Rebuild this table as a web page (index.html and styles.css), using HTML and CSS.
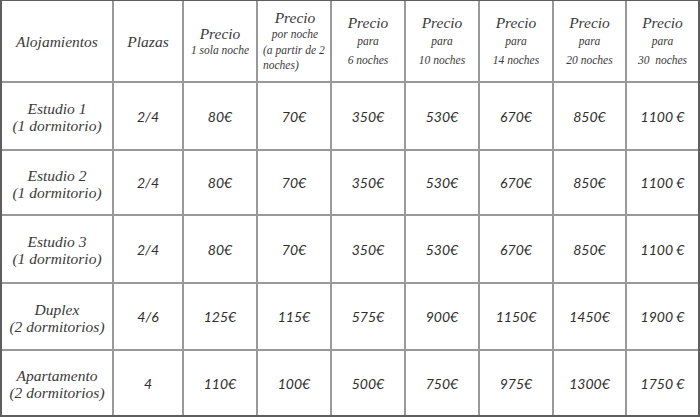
FILE: index.html
```html
<!DOCTYPE html>
<html lang="es">
<head>
<meta charset="utf-8">
<title>Tarifas</title>
<link rel="stylesheet" href="styles.css">
</head>
<body>
<div class="grid">
  <div class="cell head"><span class="big">Alojamientos</span></div>
  <div class="cell head"><span class="big">Plazas</span></div>
  <div class="cell head tight"><span class="big">Precio</span><span class="small">1 sola noche</span></div>
  <div class="cell head tight c4"><span class="big">Precio</span><span class="small">por noche</span><span class="small left">(a partir de 2 noches)</span></div>
  <div class="cell head loose"><span class="big">Precio</span><span class="small">para</span><span class="small">6 noches</span></div>
  <div class="cell head loose"><span class="big">Precio</span><span class="small">para</span><span class="small">10 noches</span></div>
  <div class="cell head loose"><span class="big">Precio</span><span class="small">para</span><span class="small">14 noches</span></div>
  <div class="cell head loose"><span class="big">Precio</span><span class="small">para</span><span class="small">20 noches</span></div>
  <div class="cell head loose"><span class="big">Precio</span><span class="small">para</span><span class="small">30&nbsp; noches</span></div>

  <div class="cell name">Estudio 1<br>(1 dormitorio)</div>
  <div class="cell num">2/4</div><div class="cell num">80€</div><div class="cell num">70€</div><div class="cell num">350€</div><div class="cell num">530€</div><div class="cell num">670€</div><div class="cell num">850€</div><div class="cell num">1100 €</div>

  <div class="cell name">Estudio 2<br>(1 dormitorio)</div>
  <div class="cell num">2/4</div><div class="cell num">80€</div><div class="cell num">70€</div><div class="cell num">350€</div><div class="cell num">530€</div><div class="cell num">670€</div><div class="cell num">850€</div><div class="cell num">1100 €</div>

  <div class="cell name">Estudio 3<br>(1 dormitorio)</div>
  <div class="cell num">2/4</div><div class="cell num">80€</div><div class="cell num">70€</div><div class="cell num">350€</div><div class="cell num">530€</div><div class="cell num">670€</div><div class="cell num">850€</div><div class="cell num">1100 €</div>

  <div class="cell name">Duplex<br>(2 dormitorios)</div>
  <div class="cell num">4/6</div><div class="cell num">125€</div><div class="cell num">115€</div><div class="cell num">575€</div><div class="cell num">900€</div><div class="cell num">1150€</div><div class="cell num">1450€</div><div class="cell num">1900 €</div>

  <div class="cell name">Apartamento<br>(2 dormitorios)</div>
  <div class="cell num">4</div><div class="cell num">110€</div><div class="cell num">100€</div><div class="cell num">500€</div><div class="cell num">750€</div><div class="cell num">975€</div><div class="cell num">1300€</div><div class="cell num">1750 €</div>
</div>
</body>
</html>
```
FILE: styles.css
```css
html, body {
  margin: 0;
  padding: 0;
  background: #ffffff;
}

.grid {
  width: 700px;
  height: 417px;
  box-sizing: border-box;
  display: grid;
  grid-template-columns: 110px 68px 72px 72px 72px 72px 72px 71px 71px;
  grid-template-rows: 80px 66px 63px 66px 65px 64px;
  gap: 2px;
  background: #999999;
  border-style: solid;
  border-color: #5e5e5e;
  border-width: 1px 2px 2px 2px;
  color: #3a3a3a;
}

.cell {
  background: #ffffff;
  display: flex;
  flex-direction: column;
  align-items: center;
  justify-content: center;
  text-align: center;
}

.head {
  font-family: "Liberation Serif", "Times New Roman", serif;
  font-style: italic;
}

.big {
  font-size: 15.5px;
  line-height: 17px;
}

.small {
  font-size: 11.5px;
  line-height: 16px;
}

.loose .small {
  line-height: 19px;
}

.loose .big {
  line-height: 19px;
}

.c4 {
  padding: 0 3px 0 5px;
}

.c4 .left {
  align-self: stretch;
  text-align: left;
  line-height: 15px;
  margin-top: 1px;
}

.name {
  font-family: "Liberation Serif", "Times New Roman", serif;
  font-style: italic;
  font-size: 15.5px;
  line-height: 17px;
  padding-top: 2px;
}

.num {
  font-family: Lato, "Liberation Sans", sans-serif;
  font-style: italic;
  font-size: 14px;
  color: #2e2e2e;
}
```
